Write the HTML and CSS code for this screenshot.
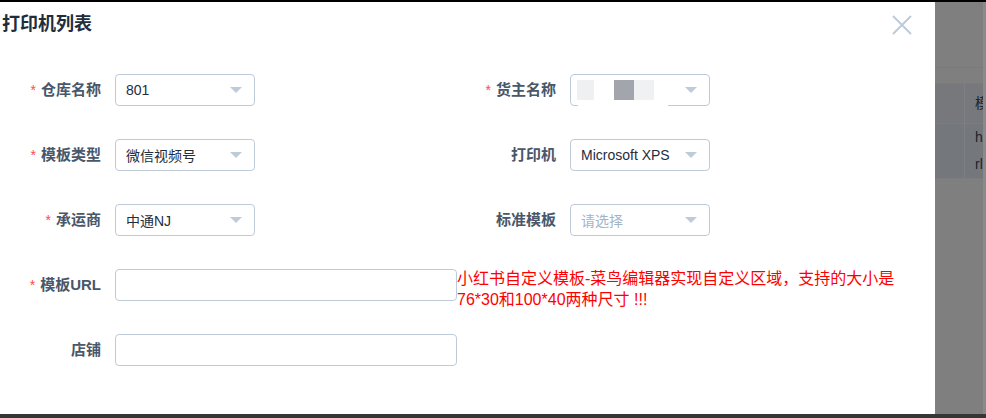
FILE: index.html
```html
<!DOCTYPE html>
<html lang="zh-CN">
<head>
    <meta charset="UTF-8">
    <title>打印机列表</title>
    <link rel="stylesheet" href="styles.css">
</head>
<body>
    <div class="top-line"></div>
    <div class="screen">
        <div class="dialog">
            <div class="dialog-header">
                <span class="dialog-title">打印机列表</span>
                <button class="dialog-close" aria-label="关闭">
                    <svg width="20" height="20" viewBox="0 0 20 20">
                        <path d="M1 1 L19 19 M19 1 L1 19" stroke="#bfcbd9" stroke-width="2" fill="none"/>
                    </svg>
                </button>
            </div>

            <div class="form">
                <div class="form-item">
                    <label class="form-label"><span class="req">*</span>仓库名称</label>
                    <div class="select"><span class="select-value">801</span><i class="arrow"></i></div>
                </div>
                <div class="form-item">
                    <label class="form-label"><span class="req">*</span>货主名称</label>
                    <div class="select owner">
                        <span class="select-value">
                            <span class="blur blur-a"></span>
                            <span class="blur blur-b"></span>
                            <span class="blur blur-c"></span>
                        </span>
                        <i class="arrow"></i>
                        <span class="mask"></span>
                    </div>
                </div>

                <div class="form-item">
                    <label class="form-label"><span class="req">*</span>模板类型</label>
                    <div class="select"><span class="select-value">微信视频号</span><i class="arrow"></i></div>
                </div>
                <div class="form-item">
                    <label class="form-label">打印机</label>
                    <div class="select"><span class="select-value">Microsoft XPS</span><i class="arrow"></i></div>
                </div>

                <div class="form-item">
                    <label class="form-label"><span class="req">*</span>承运商</label>
                    <div class="select"><span class="select-value">中通NJ</span><i class="arrow"></i></div>
                </div>
                <div class="form-item">
                    <label class="form-label">标准模板</label>
                    <div class="select"><span class="select-value placeholder">请选择</span><i class="arrow"></i></div>
                </div>

                <div class="form-item wide">
                    <label class="form-label"><span class="req">*</span>模板URL</label>
                    <input class="input" type="text">
                    <div class="hint">小红书自定义模板-菜鸟编辑器实现自定义区域，支持的大小是76*30和100*40两种尺寸 !!!</div>
                </div>

                <div class="form-item wide">
                    <label class="form-label">店铺</label>
                    <input class="input" type="text">
                </div>
            </div>
        </div>

        <div class="backdrop">
            <div class="bd-toolbar"></div>
            <div class="bd-row bd-head">
                <div class="bd-cell first"></div>
                <div class="bd-cell">模</div>
            </div>
            <div class="bd-row bd-body">
                <div class="bd-cell first"></div>
                <div class="bd-cell">h<br>rl</div>
            </div>
        </div>
        <div class="scroll-edge"></div>
    </div>
    <div class="bottom-bar"></div>
</body>
</html>
```

FILE: styles.css
```css
/* 页面和遮罩 */
body {
    margin: 0;
    padding: 0;
    width: 986px;
    height: 418px;
    overflow: hidden;
    font-family: "Liberation Sans", "Noto Sans CJK SC", sans-serif;
    background-color: #7f7f7f;
    display: flex;
    flex-direction: column;
}
.top-line {
    height: 2px;
    background-color: #000000;
}
.screen {
    height: 412px;
    display: flex;
}
.bottom-bar {
    height: 4px;
    background-color: #363636;
}

/* 弹窗 */
.dialog {
    width: 935px;
    flex-shrink: 0;
    background-color: #ffffff;
    box-sizing: border-box;
}
.dialog-header {
    display: flex;
    justify-content: space-between;
    align-items: flex-start;
    padding: 10px 23px 0 2px;
    height: 24px;
}
.dialog-title {
    font-size: 18px;
    line-height: 24px;
    font-weight: bold;
    color: #1f2d3d;
}
.dialog-close {
    border: none;
    background: none;
    padding: 0;
    margin-top: 3px;
    width: 20px;
    height: 20px;
    cursor: pointer;
}
.dialog-close svg {
    display: block;
}

/* 表单 */
.form {
    padding-top: 38px;
    display: grid;
    grid-template-columns: 455px 455px;
    row-gap: 33px;
}
.form-item {
    display: flex;
    align-items: flex-start;
    height: 32px;
}
.form-item.wide {
    grid-column: span 2;
}
.form-label {
    width: 115px;
    flex-shrink: 0;
    box-sizing: border-box;
    padding-right: 14px;
    text-align: right;
    font-size: 15px;
    font-weight: bold;
    line-height: 32px;
    color: #48576a;
}
.req {
    color: #ff4949;
    font-weight: normal;
    font-size: 14px;
    margin-right: 5px;
}

.select {
    position: relative;
    width: 140px;
    height: 32px;
    box-sizing: border-box;
    border: 1px solid #bfcbd9;
    border-radius: 4px;
    padding: 0 12px 0 10px;
    display: flex;
    align-items: center;
    font-size: 14px;
    color: #1f2d3d;
}
.select-value {
    flex: 1;
    overflow: hidden;
    white-space: nowrap;
    margin-right: 8px;
}
.select-value.placeholder {
    color: #a5b3c6;
}
.arrow {
    flex-shrink: 0;
    width: 0;
    height: 0;
    border-left: 6px solid transparent;
    border-right: 6px solid transparent;
    border-top: 6px solid #bfcbd9;
}

/* 货主名称打码 */
.owner .select-value {
    display: flex;
    height: 20px;
    margin-left: -4px;
}
.blur {
    display: block;
    height: 20px;
}
.blur-a {
    width: 17px;
    background-color: #eff0f2;
}
.blur-b {
    width: 20px;
    margin-left: 20px;
    background-color: #a2a6ac;
}
.blur-c {
    width: 20px;
    background-color: #f0f1f3;
}
.owner .mask {
    position: absolute;
    left: 7px;
    bottom: -1px;
    width: 90px;
    height: 2px;
    background-color: #ffffff;
}

.input {
    width: 342px;
    flex-shrink: 0;
    height: 32px;
    box-sizing: border-box;
    border: 1px solid #bfcbd9;
    border-radius: 4px;
    padding: 0 10px;
    font-size: 14px;
    outline: none;
    margin: 0;
}
.hint {
    width: 440px;
    margin-top: -1px;
    font-size: 16px;
    line-height: 21px;
    color: #ff0000;
}

/* 遮罩后面的表格 */
.backdrop {
    flex: 1;
    min-width: 0;
    overflow: hidden;
    background-color: #7f7f7f;
}
.bd-toolbar {
    height: 65px;
    border-bottom: 1px solid #737c86;
    margin-bottom: 15px;
}
.bd-row {
    display: flex;
    border-bottom: 1px solid #7a7c80;
}
.bd-head {
    height: 39px;
    background-color: #76787b;
    border-top: 1px solid #7a7c80;
}
.bd-body {
    height: 54px;
    background-color: #74777b;
}
.bd-cell {
    padding-left: 10px;
    font-size: 14px;
    line-height: 27px;
    color: #1a2330;
    white-space: nowrap;
}
.bd-head .bd-cell {
    line-height: 39px;
}
.bd-cell.first {
    width: 29px;
    flex-shrink: 0;
    padding: 0;
    border-right: 1px solid #7c7f83;
}
.scroll-edge {
    width: 3px;
    flex-shrink: 0;
    background-color: #8a8a8a;
}
```
